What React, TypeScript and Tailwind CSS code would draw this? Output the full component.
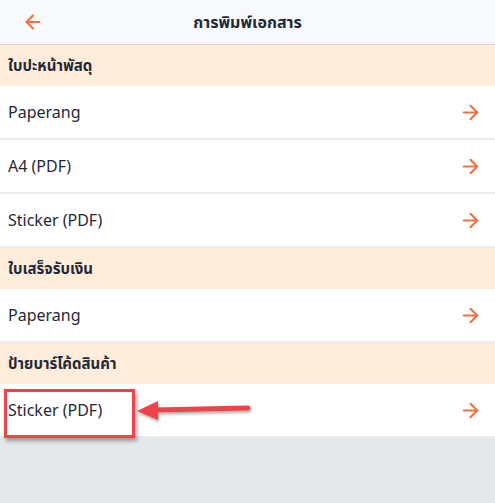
import React from 'react';
import { ArrowLeft, ArrowRight } from 'lucide-react';

interface Section {
    title: string,
    items: Array<string>,
}

const sections: Array<Section> = [
    { title: 'ใบปะหน้าพัสดุ', items: ['Paperang', 'A4 (PDF)', 'Sticker (PDF)'] },
    { title: 'ใบเสร็จรับเงิน', items: ['Paperang'] },
    { title: 'ป้ายบาร์โค้ดสินค้า', items: ['Sticker (PDF)'] },
];

export default function App() {
    return (
        <div className="w-[495px] h-[503px] bg-[#e5e7eb] text-[#1f2937] overflow-hidden" style={{ fontFamily: '"Noto Sans", "Noto Sans Thai", "Liberation Sans", sans-serif' }}>
            <div className="h-[45px] bg-[#f8f9fb] border-b border-[#d4d8de] flex items-center relative">
                <div className="w-[66px] flex justify-center">
                    <ArrowLeft size={22} strokeWidth={2.2} className="text-[#f2703e]" />
                </div>
                <div className="flex-1 text-center text-[16px] font-bold pr-[66px]">การพิมพ์เอกสาร</div>
            </div>
            {sections.map((section, si) => (
                <div key={si}>
                    <div className="h-[41px] bg-[#ffecda] flex items-center px-2 text-[15px] font-bold">
                        {section.title}
                    </div>
                    {section.items.map((item, ii) => (
                        <div key={ii} className="h-[54px] bg-white border-b-2 border-[#eaecef] flex items-center justify-between pl-2 pr-[13px] text-[16px] relative">
                            <span>{item}</span>
                            <ArrowRight size={23} strokeWidth={2.2} className="text-[#f2703e]" />
                            {si === 2 && (
                                <>
                                    <div className="absolute left-[4px] top-[5px] w-[131px] h-[49px] border-[3px] border-[#f0434a] shadow-[2px_3px_4px_rgba(0,0,0,0.35)]" />
                                    <svg className="absolute left-[134px] top-[12px]" width="120" height="28" viewBox="0 0 120 28">
                                        <defs>
                                            <filter id="sh" x="-10%" y="-40%" width="130%" height="200%">
                                                <feDropShadow dx="1" dy="2" stdDeviation="1.5" floodOpacity="0.35" />
                                            </filter>
                                        </defs>
                                        <g filter="url(#sh)">
                                            <line x1="20" y1="14" x2="114" y2="12" stroke="#f0434a" strokeWidth="5" strokeLinecap="round" />
                                            <polygon points="3,15 24,5 24,24" fill="#f0434a" />
                                        </g>
                                    </svg>
                                </>
                            )}
                        </div>
                    ))}
                </div>
            ))}
        </div>
    );
}
